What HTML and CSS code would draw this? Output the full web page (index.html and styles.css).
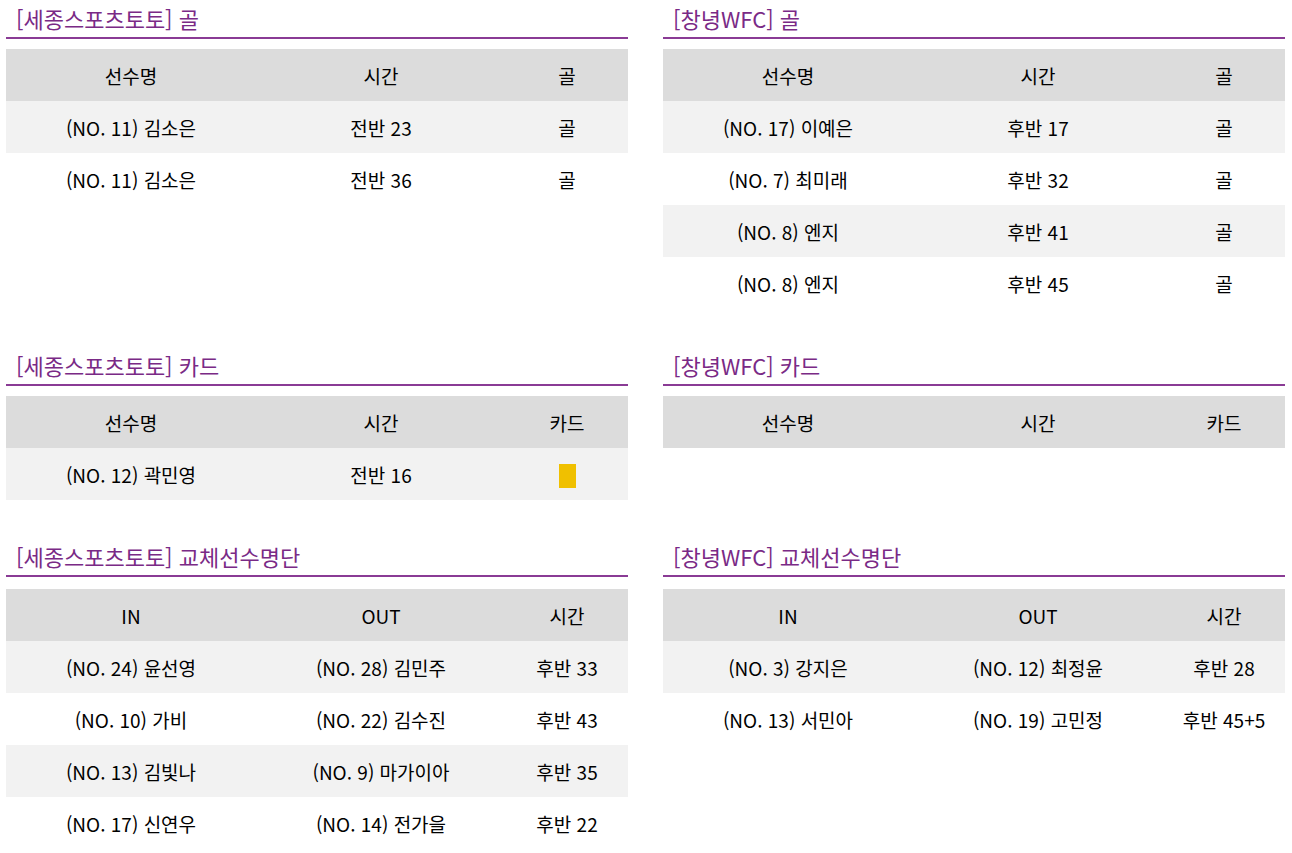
FILE: index.html
```html
<!DOCTYPE html>
<html lang="ko">
<head>
<meta charset="utf-8">
<link rel="stylesheet" href="styles.css">
</head>
<body>
<div class="page">
  <section class="block">
    <h2 class="title">[세종스포츠토토] 골</h2>
    <table class="tbl">
      <colgroup><col class="c1"><col class="c2"><col class="c3"></colgroup>
      <thead><tr><th>선수명</th><th>시간</th><th>골</th></tr></thead>
      <tbody>
        <tr><td>(NO. 11) 김소은</td><td>전반 23</td><td>골</td></tr>
        <tr><td>(NO. 11) 김소은</td><td>전반 36</td><td>골</td></tr>
      </tbody>
    </table>
  </section>
  <section class="block">
    <h2 class="title">[창녕WFC] 골</h2>
    <table class="tbl">
      <colgroup><col class="c1"><col class="c2"><col class="c3"></colgroup>
      <thead><tr><th>선수명</th><th>시간</th><th>골</th></tr></thead>
      <tbody>
        <tr><td>(NO. 17) 이예은</td><td>후반 17</td><td>골</td></tr>
        <tr><td>(NO. 7) 최미래</td><td>후반 32</td><td>골</td></tr>
        <tr><td>(NO. 8) 엔지</td><td>후반 41</td><td>골</td></tr>
        <tr><td>(NO. 8) 엔지</td><td>후반 45</td><td>골</td></tr>
      </tbody>
    </table>
  </section>
  <section class="block">
    <h2 class="title">[세종스포츠토토] 카드</h2>
    <table class="tbl">
      <colgroup><col class="c1"><col class="c2"><col class="c3"></colgroup>
      <thead><tr><th>선수명</th><th>시간</th><th>카드</th></tr></thead>
      <tbody>
        <tr><td>(NO. 12) 곽민영</td><td>전반 16</td><td><span class="card-yellow"></span></td></tr>
      </tbody>
    </table>
  </section>
  <section class="block">
    <h2 class="title">[창녕WFC] 카드</h2>
    <table class="tbl">
      <colgroup><col class="c1"><col class="c2"><col class="c3"></colgroup>
      <thead><tr><th>선수명</th><th>시간</th><th>카드</th></tr></thead>
      <tbody></tbody>
    </table>
  </section>
  <section class="block block--sub">
    <h2 class="title">[세종스포츠토토] 교체선수명단</h2>
    <table class="tbl">
      <colgroup><col class="c1"><col class="c2"><col class="c3"></colgroup>
      <thead><tr><th>IN</th><th>OUT</th><th>시간</th></tr></thead>
      <tbody>
        <tr><td>(NO. 24) 윤선영</td><td>(NO. 28) 김민주</td><td>후반 33</td></tr>
        <tr><td>(NO. 10) 가비</td><td>(NO. 22) 김수진</td><td>후반 43</td></tr>
        <tr><td>(NO. 13) 김빛나</td><td>(NO. 9) 마가이아</td><td>후반 35</td></tr>
        <tr><td>(NO. 17) 신연우</td><td>(NO. 14) 전가을</td><td>후반 22</td></tr>
      </tbody>
    </table>
  </section>
  <section class="block block--sub">
    <h2 class="title">[창녕WFC] 교체선수명단</h2>
    <table class="tbl">
      <colgroup><col class="c1"><col class="c2"><col class="c3"></colgroup>
      <thead><tr><th>IN</th><th>OUT</th><th>시간</th></tr></thead>
      <tbody>
        <tr><td>(NO. 3) 강지은</td><td>(NO. 12) 최정윤</td><td>후반 28</td></tr>
        <tr><td>(NO. 13) 서민아</td><td>(NO. 19) 고민정</td><td>후반 45+5</td></tr>
      </tbody>
    </table>
  </section>
</div>
</body>
</html>
```
FILE: styles.css
```css
* { box-sizing: border-box; }
html, body { margin: 0; padding: 0; background: #fff; }
body {
  font-family: "Noto Sans CJK KR", "Noto Sans", sans-serif;
  color: #000;
}
.page {
  display: grid;
  grid-template-columns: 622px 622px;
  column-gap: 35px;
  row-gap: 38px;
  padding: 0 7px 0 6px;
  align-items: start;
}
.title {
  margin: 0 0 10px 0;
  padding: 4px 0 4px 10px;
  font-size: 22px;
  line-height: 29px;
  font-weight: 400;
  color: #7a2a86;
  border-bottom: 2px solid #8a3b95;
}
.block--sub .title { margin-bottom: 12px; }
.tbl {
  width: 100%;
  border-collapse: collapse;
  table-layout: fixed;
  font-size: 19px;
}
.c1, .c2 { width: 250px; }
.c3 { width: 122px; }
.tbl th, .tbl td {
  height: 52px;
  padding: 0;
  text-align: center;
  vertical-align: middle;
  font-weight: 400;
}
.tbl thead th { background: #dcdcdc; }
.tbl tbody tr:nth-child(odd) td { background: #f2f2f2; }
.card-yellow {
  display: inline-block;
  width: 17px;
  height: 24px;
  background: #f0c000;
  vertical-align: middle;
}
```
